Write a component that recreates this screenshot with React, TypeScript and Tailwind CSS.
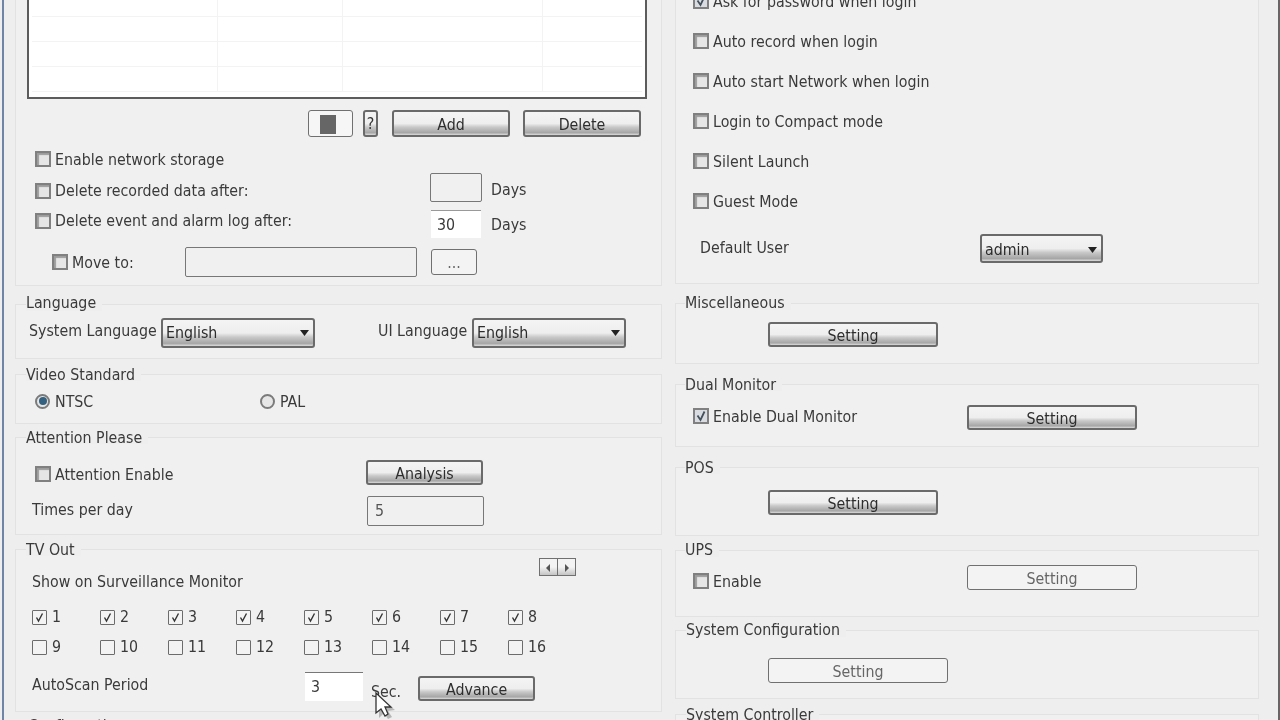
import type { ReactNode } from 'react';

const FONT = 'font-["DejaVu_Sans",sans-serif] [font-stretch:condensed]';

// shaded Vista style button used for anything that is enabled
const GLOSS =
  'bg-[linear-gradient(#f4f4f4_0%,#eeeeee_50%,#c8c8c8_66%,#a6a6a6_90%,#dcdcdc_100%)] border-2 border-[#6a6a6a] rounded-[3px]';

function Btn({ label, className = '' }: { label: string; className?: string }) {
  return (
    <div className={`${GLOSS} flex items-center justify-center h-[25px] pt-[3px] text-[#2e2e2e] ${className}`}>{label}</div>
  );
}

function FlatBtn({ label, className = '' }: { label: ReactNode; className?: string }) {
  return (
    <div className={`flex items-center justify-center bg-[#f3f3f3] border border-[#707070] rounded-[3px] pt-[2px] text-[#666] ${className}`}>
      {label}
    </div>
  );
}

function Combo({ value, className = '' }: { value: string; className?: string }) {
  return (
    <div className={`${GLOSS} flex items-center justify-between pl-[3px] pr-[3px] ${className}`}>
      <span className="text-[#2c2c2c]">{value}</span>
      <svg width="9" height="6" viewBox="0 0 9 6" className="mr-[1px]">
        <path d="M0 0h9L4.5 6z" fill="#222" />
      </svg>
    </div>
  );
}

function Check({ label, checked = false, className = '' }: { label: string; checked?: boolean; className?: string }) {
  return (
    <div className={`flex items-center gap-[4px] h-[16px] ${className}`}>
      <span className="relative w-[16px] h-[16px] shrink-0 border-2 border-[#808080] bg-[#e6e6e6] shadow-[inset_2px_2px_1px_#9c9c9c]">
        {checked && (
          <svg viewBox="0 0 12 12" className="absolute inset-0 w-[12px] h-[12px] bg-[#d9dde2]">
            <path d="M2.5 5.5 5.5 10 9.5 1.5" fill="none" stroke="#44505c" strokeWidth="1.8" />
          </svg>
        )}
      </span>
      <span className="whitespace-nowrap pt-[2px]">{label}</span>
    </div>
  );
}

function TvCheck({ n, checked }: { n: number; checked: boolean }) {
  return (
    <div className="flex items-center gap-[5px] h-[16px]">
      <span className="w-[15px] h-[15px] shrink-0 border border-[#6c6c6c] rounded-[1px] bg-[#f3f3f3]">
        {checked && (
          <svg viewBox="0 0 13 13" className="w-[13px] h-[13px]">
            <path d="M3.5 6.5 5.5 10 9.5 2.5" fill="none" stroke="#333" strokeWidth="1.4" />
          </svg>
        )}
      </span>
      <span>{n}</span>
    </div>
  );
}

function Radio({ label, on = false }: { label: string; on?: boolean }) {
  return (
    <div className="flex items-center gap-[5px] h-[16px]">
      <span className="flex items-center justify-center w-[15px] h-[15px] rounded-full border-2 border-[#7b7b7b] bg-[#e6e6e6]">
        {on && <span className="w-[8px] h-[8px] rounded-full bg-[#33617f]" />}
      </span>
      <span className="pt-[2px]">{label}</span>
    </div>
  );
}

function Group({
  title,
  className = '',
  titleClass = 'ml-[9px] leading-[19px]',
  children,
}: {
  title: string;
  className?: string;
  titleClass?: string;
  children?: ReactNode;
}) {
  return (
    <section className={`shrink-0 border border-[#e2e2e2] bg-[#f0f0f0] ${className}`}>
      <div className={`-mt-[10px] w-fit h-[16px] pr-[6px] bg-[#eeeeee] whitespace-nowrap ${titleClass}`}>{title}</div>
      {children}
    </section>
  );
}

function RecordTable() {
  return (
    <div className="-mt-[1px] w-[620px] h-[100px] shrink-0 bg-white border-2 border-[#5c5c5c] border-t-0 overflow-hidden">
      <div className="h-[18px] border-b border-[#f3f3f3] mx-[3px] grid grid-cols-[186px_125px_200px_1fr]">
        <div className="border-r border-[#f3f3f3]" />
        <div className="border-r border-[#f3f3f3]" />
        <div className="border-r border-[#f3f3f3]" />
      </div>
      {[0, 1, 2].map((r) => (
        <div key={r} className="grid grid-cols-[186px_125px_200px_1fr] h-[25px] mx-[3px] border-b border-[#f3f3f3]">
          <div className="border-r border-[#f3f3f3]" />
          <div className="border-r border-[#f3f3f3]" />
          <div className="border-r border-[#f3f3f3]" />
          <div />
        </div>
      ))}
    </div>
  );
}

function StorageGroup() {
  return (
    <section className="shrink-0 h-[286px] border-x border-b border-[#e2e2e2] bg-[#f0f0f0] pl-[11px]">
      <RecordTable />
      <div className="flex mt-[11px] ml-[281px] h-[27px]">
        <FlatBtn
          className="w-[45px] h-[27px] bg-[#f6f6f6] pr-[5px]"
          label={<span className="block w-[16px] h-[19px] bg-[#666]" />}
        />
        <div className={`${GLOSS} ml-[10px] w-[15px] h-[27px] flex items-center justify-center text-[#333]`}>?</div>
        <Btn label="Add" className="ml-[14px] w-[118px] h-[27px]" />
        <Btn label="Delete" className="ml-[13px] w-[118px] h-[27px]" />
      </div>
      <Check label="Enable network storage" className="mt-[14px] ml-[8px]" />
      <div className="flex items-start mt-[6px] ml-[8px]">
        <Check label="Delete recorded data after:" className="mt-[10px] w-[395px] [&>span:last-child]:pt-0" />
        <div className="w-[52px] h-[29px] bg-[#f0f0f0] border border-[#777] rounded-[2px]" />
        <span className="ml-[9px] mt-[9px]">Days</span>
      </div>
      <div className="flex items-start mt-[8px] ml-[8px]">
        <Check label="Delete event and alarm log after:" className="mt-[3px] w-[396px] [&>span:last-child]:pt-0" />
        <div className="w-[50px] h-[28px] bg-white border-t border-[#999] pl-[6px] leading-[28px]">30</div>
        <span className="ml-[10px] mt-[7px]">Days</span>
      </div>
      <div className="flex items-center mt-[9px] ml-[25px] h-[30px]">
        <Check label="Move to:" className="w-[133px]" />
        <div className="w-[232px] h-[30px] bg-[#f0f0f0] border border-[#777] rounded-[2px]" />
        <FlatBtn className="ml-[14px] w-[46px] h-[26px] items-end pb-[3px]" label="..." />
      </div>
    </section>
  );
}

function ArrowGlyph({ d }: { d: string }) {
  return (
    <svg width="9" height="10" viewBox="0 0 9 10">
      <path d={d} fill="#555" />
    </svg>
  );
}

function LeftColumn() {
  const labels = Array.from({ length: 16 }, (_, i) => i + 1);
  return (
    <div className="flex flex-col w-[647px] ml-[11px] shrink-0">
      <StorageGroup />
      <Group title="Language" className="mt-[18px] h-[55px]" titleClass="ml-[10px] leading-[15px]">
        <div className="flex items-center mt-[7px] pl-[13px] h-[30px]">
          <span className="w-[132px] pb-[4px] whitespace-nowrap">System Language</span>
          <Combo value="English" className="w-[154px] h-[30px]" />
          <span className="ml-[63px] w-[94px] pb-[4px] whitespace-nowrap">UI Language</span>
          <Combo value="English" className="w-[154px] h-[30px]" />
        </div>
      </Group>
      <Group title="Video Standard" className="mt-[15px] h-[50px]" titleClass="ml-[10px] leading-[19px]">
        <div className="flex mt-[12px] pl-[19px]">
          <div className="w-[225px]">
            <Radio label="NTSC" on />
          </div>
          <Radio label="PAL" />
        </div>
      </Group>
      <Group title="Attention Please" className="mt-[13px] h-[98px]" titleClass="ml-[10px] leading-[19px]">
        <div className="flex items-center mt-[16px] pl-[19px] h-[25px]">
          <Check label="Attention Enable" className="w-[331px] mt-[3px]" />
          <Btn label="Analysis" className="w-[117px]" />
        </div>
        <div className="flex items-center mt-[11px] pl-[16px] h-[30px]">
          <span className="w-[335px] pb-[2px]">Times per day</span>
          <div className="w-[117px] h-[30px] border border-[#777] rounded-[2px] pl-[7px] leading-[28px] text-[#555]">5</div>
        </div>
      </Group>
      <Group title="TV Out" className="mt-[14px] h-[163px]" titleClass="ml-[10px] leading-[19px]">
        <div className="flex ml-[523px] mt-[2px] h-[18px] w-[37px]">
          <FlatBtn
            className="w-[19px] h-[18px] rounded-none border-[#8a8a8a] bg-[linear-gradient(#f3f3f3_50%,#c4c4c4)]"
            label={<ArrowGlyph d="M6 1 2 5l4 4z" />}
          />
          <FlatBtn
            className="w-[18px] h-[18px] rounded-none border-[#8a8a8a] border-l-0 bg-[linear-gradient(#f3f3f3_50%,#c4c4c4)]"
            label={<ArrowGlyph d="M3 1l4 4-4 4z" />}
          />
        </div>
        <div className="-mt-[3px] pl-[16px] h-[16px] leading-[18px]">Show on Surveillance Monitor</div>
        <div className="grid grid-cols-[repeat(8,68px)] gap-y-[14px] mt-[20px] pl-[16px]">
          {labels.map((n) => (
            <TvCheck key={n} n={n} checked={n <= 8} />
          ))}
        </div>
        <div className="flex items-start mt-[17px] pl-[16px]">
          <span className="w-[273px] mt-[5px]">AutoScan Period</span>
          <div className="w-[58px] h-[29px] bg-white border-t border-[#777] pl-[6px] leading-[28px]">3</div>
          <span className="ml-[8px] mt-[12px]">Sec.</span>
          <Btn label="Advance" className="ml-[17px] mt-[4px] w-[117px] h-[25px]" />
        </div>
      </Group>
      <Group title="Configuration" className="mt-[13px] h-[40px]" titleClass="ml-[12px] leading-[19px]" />
    </div>
  );
}

function RightColumn() {
  const options = ['Auto record when login', 'Auto start Network when login', 'Login to Compact mode', 'Silent Launch', 'Guest Mode'];
  return (
    <div className="flex flex-col w-[584px] ml-[13px] shrink-0">
      <section className="shrink-0 h-[284px] border-x border-b border-[#e2e2e2] bg-[#f0f0f0] pl-[17px]">
        <div className="flex flex-col gap-[24px] -mt-[7px]">
          <Check label="Ask for password when login" checked />
          {options.map((o) => (
            <Check key={o} label={o} />
          ))}
        </div>
        <div className="flex items-center mt-[25px] ml-[7px] h-[29px]">
          <span className="w-[280px] pb-[2px]">Default User</span>
          <Combo value="admin" className="w-[123px] h-[29px] pt-[2px]" />
        </div>
      </section>
      <Group title="Miscellaneous" className="mt-[19px] h-[61px]" titleClass="ml-[9px] leading-[17px]">
        <Btn label="Setting" className="mt-[12px] ml-[92px] w-[170px]" />
      </Group>
      <Group title="Dual Monitor" className="mt-[20px] h-[63px]">
        <div className="flex items-start mt-[14px] pl-[17px]">
          <Check label="Enable Dual Monitor" checked className="mt-[3px] w-[274px]" />
          <Btn label="Setting" className="w-[170px]" />
        </div>
      </Group>
      <Group title="POS" className="mt-[20px] h-[69px]">
        <Btn label="Setting" className="mt-[16px] ml-[92px] w-[170px]" />
      </Group>
      <Group title="UPS" className="mt-[14px] h-[67px]" titleClass="ml-[9px] leading-[17px]">
        <div className="flex items-start pl-[17px]">
          <Check label="Enable" className="mt-[16px] w-[274px]" />
          <FlatBtn label="Setting" className="mt-[8px] w-[170px] h-[25px]" />
        </div>
      </Group>
      <Group title="System Configuration" className="mt-[13px] h-[69px]" titleClass="ml-[10px] leading-[17px]">
        <FlatBtn label="Setting" className="mt-[21px] ml-[92px] w-[180px] h-[25px]" />
      </Group>
      <Group title="System Controller" className="mt-[15px] h-[40px]" titleClass="ml-[10px] leading-[19px]" />
    </div>
  );
}

export default function App() {
  return (
    <div className={`relative flex w-[1280px] h-[720px] overflow-hidden bg-[#eeeeee] pl-[2px] text-[15.8px] leading-[16px] text-[#3a3a3a] blur-[0.4px] ${FONT}`}>
      <div className="w-[2px] h-full shrink-0 bg-[#6f84a6]" />
      <LeftColumn />
      <RightColumn />
      <div className="ml-auto w-[2px] h-full shrink-0 bg-[#666]" />
      {/* mouse pointer sits over the Sec. label */}
      <svg width="24" height="30" viewBox="0 0 24 30" className="absolute left-[373px] top-[691px]">
        <path d="M6 6 L6 27 L11 22 L15 28 L19 26 L15 20 L22 19 Z" fill="#888" opacity="0.55" />
        <path d="M3 2 L3 22 L8 18 L12 25 L15 23 L12 16 L18 16 Z" fill="#fff" stroke="#333" strokeWidth="1.3" />
      </svg>
    </div>
  );
}
